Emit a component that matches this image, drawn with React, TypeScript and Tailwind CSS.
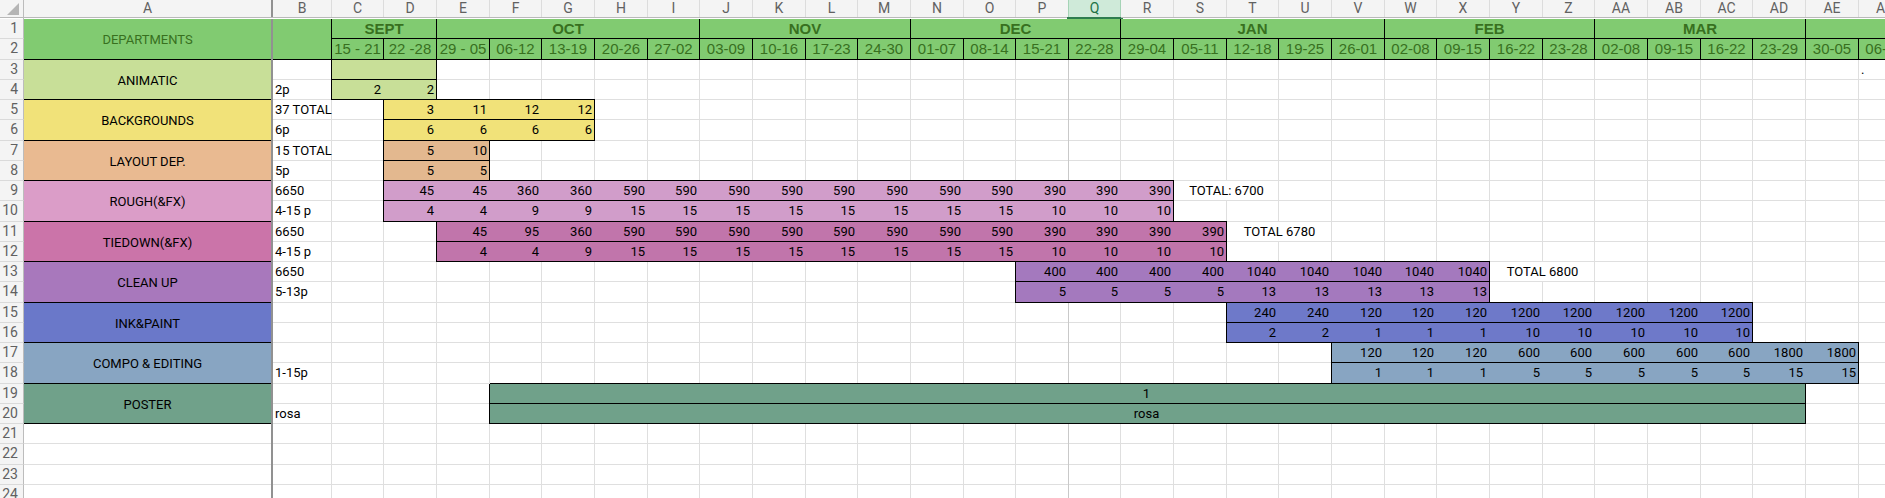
import React from "react";

const COLS = [
  "C", "D", "E", "F", "G", "H", "I", "J", "K", "L", "M", "N", "O", "P", "Q",
  "R", "S", "T", "U", "V", "W", "X", "Y", "Z", "AA", "AB", "AC", "AD", "AE", "AF",
];

const NARROW = ["C", "F", "I", "L", "O", "Q", "T", "W", "Z", "AC", "AF"];

const MONTHS = [
  { name: "SEPT", span: 2 },
  { name: "OCT", span: 5 },
  { name: "NOV", span: 4 },
  { name: "DEC", span: 4 },
  { name: "JAN", span: 5 },
  { name: "FEB", span: 4 },
  { name: "MAR", span: 4 },
  { name: "", span: 2 },
];

const WEEKS = [
  "15 - 21", "22 -28", "29 - 05", "06-12", "13-19", "20-26", "27-02", "03-09",
  "10-16", "17-23", "24-30", "01-07", "08-14", "15-21", "22-28", "29-04",
  "05-11", "12-18", "19-25", "26-01", "02-08", "09-15", "16-22", "23-28",
  "02-08", "09-15", "16-22", "23-29", "30-05", "06-12",
];

type Value = number | string;

interface Department {
  name: string;
  label: string;
  bar: string;
  notes: [string, string];
  start: string;
  values: [Value[], Value[]];
  merged?: number;
  total?: string;
}

const times = (n: number, v: Value): Value[] => Array<Value>(n).fill(v);

const DEPARTMENTS: Department[] = [
  { name: "ANIMATIC", label: "bg-[#c8df98]", bar: "bg-[#c8df98]", notes: ["", "2p"], start: "C", values: [["", ""], [2, 2]] },
  { name: "BACKGROUNDS", label: "bg-[#f1e279]", bar: "bg-[#f1e279]", notes: ["37 TOTAL", "6p"], start: "D", values: [[3, 11, 12, 12], times(4, 6)] },
  { name: "LAYOUT DEP.", label: "bg-[#e9ba91]", bar: "bg-[#e3b88f]", notes: ["15 TOTAL", "5p"], start: "D", values: [[5, 10], [5, 5]] },
  {
    name: "ROUGH(&FX)", label: "bg-[#db9dc8]", bar: "bg-[#d19dca]", notes: ["6650", "4-15 p"], start: "D",
    values: [[45, 45, 360, 360, ...times(8, 590), 390, 390, 390], [4, 4, 9, 9, ...times(8, 15), 10, 10, 10]],
    total: "TOTAL: 6700",
  },
  {
    name: "TIEDOWN(&FX)", label: "bg-[#cb74a9]", bar: "bg-[#c175ab]", notes: ["6650", "4-15 p"], start: "E",
    values: [[45, 95, 360, ...times(8, 590), ...times(4, 390)], [4, 4, 9, ...times(8, 15), ...times(4, 10)]],
    total: "TOTAL 6780",
  },
  {
    name: "CLEAN UP", label: "bg-[#a878bc]", bar: "bg-[#a479be]", notes: ["6650", "5-13p"], start: "P",
    values: [[...times(4, 400), ...times(5, 1040)], [...times(4, 5), ...times(5, 13)]],
    total: "TOTAL 6800",
  },
  {
    name: "INK&PAINT", label: "bg-[#6a78c9]", bar: "bg-[#6e79c9]", notes: ["", ""], start: "T",
    values: [[240, 240, 120, 120, 120, ...times(5, 1200)], [2, 2, 1, 1, 1, ...times(5, 10)]],
  },
  {
    name: "COMPO & EDITING", label: "bg-[#88a5c2]", bar: "bg-[#88a5c2]", notes: ["", "1-15p"], start: "V",
    values: [[120, 120, 120, ...times(5, 600), 1800, 1800], [1, 1, 1, ...times(5, 5), 15, 15]],
  },
  { name: "POSTER", label: "bg-[#70a18a]", bar: "bg-[#70a18a]", notes: ["", "rosa"], start: "F", values: [["1"], ["rosa"]], merged: 25 },
];

const BLANK_ROWS = [21, 22, 23, 24];

const rowHeight = (row: number) => (row % 4 === 2 ? "h-[21px]" : "h-[20px]");

function extent(row: number): [number, number] {
  const d = row >= 3 ? DEPARTMENTS[Math.floor((row - 3) / 2)] : undefined;
  if (!d) return [-1, -1];
  const from = COLS.indexOf(d.start);
  return [from, from + (d.merged ?? d.values[0].length)];
}

const inside = (row: number, col: number) => {
  const [from, to] = extent(row);
  return col >= from && col < to;
};

// Black outlines are borders; grey grid lines are inset shadows, so that the black ones stay unbroken.
function edges(blackRight: boolean, blackBottom: boolean, frozen = false) {
  if (blackRight && blackBottom) return "border-r border-b border-black";
  if (blackRight) return "border-r border-black shadow-[inset_0_-1px_#dfdfdf]";
  if (blackBottom)
    return frozen
      ? "border-b border-black shadow-[inset_-1px_0_#c9c9c9]"
      : "border-b border-black shadow-[inset_-1px_0_#dfdfdf]";
  return frozen
    ? "shadow-[inset_-1px_0_#c9c9c9,inset_0_-1px_#dfdfdf]"
    : "shadow-[inset_-1px_-1px_#dfdfdf]";
}

function RowNumber({ row }: { row: number }) {
  return (
    <th scope="row" className="border-r border-b border-r-[#bcbcbc] border-b-[#dadada] bg-[#f4f4f4] pr-[5px] text-right align-top text-[14px] font-normal text-[#616161]">
      {row}
    </th>
  );
}

function WeekCells({ row }: { row: number }) {
  const dep = DEPARTMENTS[Math.floor((row - 3) / 2)] as Department | undefined;
  const line = (row - 3) % 2;
  const [from, to] = extent(row);
  const cells: React.ReactNode[] = [];

  for (let c = 0; c < COLS.length; c++) {
    if (dep && inside(row, c)) {
      const span = dep.merged ?? 1;
      const last = c + span === to;
      cells.push(
        <td
          key={c}
          colSpan={span}
          className={`border-b border-black align-top ${dep.bar} ${dep.merged ? "text-center" : "text-right"} ${last ? "border-r pr-0.5" : "pr-[3px]"}`}
        >
          {dep.values[line][c - from]}
        </td>
      );
      c += span - 1;
      continue;
    }
    const total = dep?.total && line === 0 && c === to ? dep.total : "";
    cells.push(
      <td
        key={c}
        colSpan={total ? 2 : 1}
        className={`align-top ${edges(c + 1 === from, inside(row + 1, c), COLS[c] === "P")} ${total ? "text-center" : "pl-0.5"}`}
      >
        {total || (row === 3 && COLS[c] === "AF" ? "." : "")}
      </td>
    );
    if (total) c += 1;
  }
  return <>{cells}</>;
}

function ColumnHeader({ name, edge = "border-[#dcdcdc]" }: { name: string; edge?: string }) {
  const active = name === "Q";
  return (
    <th scope="col" className="relative p-0 align-top text-[14px] font-normal">
      <div
        className={`h-[18px] border-b border-b-[#b9b9b9] leading-[17px] ${active ? "bg-[#cfead9] text-[#217346]" : "bg-[#f4f4f4] text-[#616161]"}`}
      >
        <div className={`h-[17px] ${edge} ${name === "A" ? "border-r-2" : "border-r"}`}>{name}</div>
      </div>
      {active && <span className="absolute -left-0.5 -right-0.5 bottom-0 h-0.5 bg-[#2f7d4f]" />}
    </th>
  );
}

export default function App() {
  return (
    <main className="h-screen overflow-hidden bg-white font-['Roboto','Liberation_Sans',sans-serif] text-[13px] leading-[19px] text-black">
      <table className="w-full table-fixed border-separate border-spacing-0 whitespace-nowrap">
        <colgroup>
          <col className="w-[24px]" />
          <col className="w-[249px]" />
          <col className="w-[59px]" />
          {COLS.map((c) => (
            <col key={c} className={NARROW.includes(c) ? "w-[52px]" : "w-[53px]"} />
          ))}
        </colgroup>
        <thead>
          <tr className="h-[19px]">
            <th aria-label="Select all" className="border-r border-[#bcbcbc] p-0 align-top">
              <div className="h-[18px] border-b border-[#b9b9b9] bg-[#f4f4f4]">
                <svg viewBox="0 0 23 17" className="block h-[17px] w-[23px]">
                  <path d="M19 3V15H7Z" fill="#b5b5b5" />
                </svg>
              </div>
            </th>
            <ColumnHeader name="A" edge="border-[#919191]" />
            <ColumnHeader name="B" />
            {COLS.map((c) => (
              <ColumnHeader key={c} name={c} edge={c === "P" || c === "Q" ? "border-[#a5d3b6]" : "border-[#dcdcdc]"} />
            ))}
          </tr>
        </thead>
        <tbody>
          <tr className="h-[20px] bg-[#81cb71] text-[#38701f]">
            <RowNumber row={1} />
            <td rowSpan={2} className="border-r-2 border-[#919191] text-center align-middle shadow-[inset_0_-1px_#000]">
              DEPARTMENTS
            </td>
            <td rowSpan={2} className="border-r border-b border-black" />
            {MONTHS.map((m, i) => (
              <th
                key={i}
                scope="colgroup"
                colSpan={m.span}
                className="border-r border-b border-black p-0 text-center align-top font-['Liberation_Sans',Arial,sans-serif] text-[15px] font-bold"
              >
                {m.name}
              </th>
            ))}
          </tr>
          <tr className="h-[21px] bg-[#81cb71] text-[#38701f]">
            <RowNumber row={2} />
            {WEEKS.map((w, i) => (
              <th
                key={i}
                className="border-r border-b border-black p-0 text-center align-top font-['Liberation_Sans',Arial,sans-serif] text-[15px] font-normal"
              >
                {w}
              </th>
            ))}
          </tr>
          {DEPARTMENTS.map((d, i) =>
            [0, 1].map((line) => {
              const row = 3 + i * 2 + line;
              return (
                <tr key={row} className={rowHeight(row)}>
                  <RowNumber row={row} />
                  {line === 0 && (
                    <th
                      scope="rowgroup"
                      rowSpan={2}
                      className={`border-r-2 border-[#919191] text-center align-middle font-normal shadow-[inset_0_-1px_#000] ${d.label}`}
                    >
                      {d.name}
                    </th>
                  )}
                  <td className={`pl-0.5 align-top ${edges(inside(row, 0), false)}`}>{d.notes[line]}</td>
                  <WeekCells row={row} />
                </tr>
              );
            })
          )}
          {BLANK_ROWS.map((row) => (
            <tr key={row} className={rowHeight(row)}>
              <RowNumber row={row} />
              <td className="border-r-2 border-[#919191] shadow-[inset_0_-1px_#dfdfdf]" />
              <td className={edges(false, false)} />
              <WeekCells row={row} />
            </tr>
          ))}
        </tbody>
      </table>
    </main>
  );
}
